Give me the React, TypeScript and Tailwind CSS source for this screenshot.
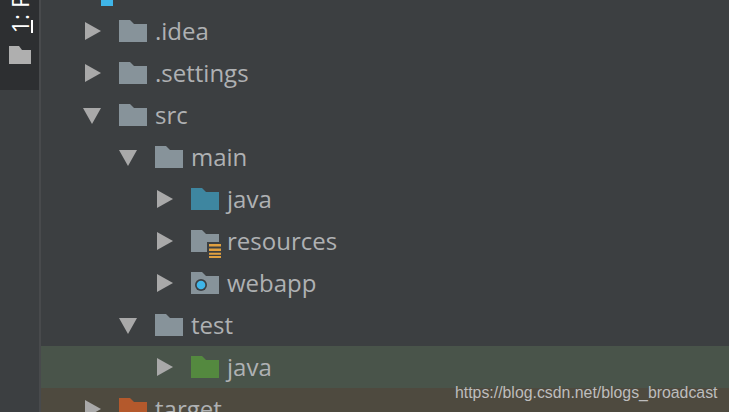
const F = "M0 0H11L15 4H28V22H0Z";
function Folder({ c }: { c: string }) {
  return <svg width="28" height="22" viewBox="0 0 28 22" className="block shrink-0"><path d={F} fill={c} /></svg>;
}
function Arrow({ open }: { open?: boolean }) {
  return (
    <svg width="18" height="18" viewBox="0 0 18 18" className="block shrink-0">
      {open ? <path d="M0 2H18L9 18Z" fill="#a9a9a9" /> : <path d="M2 0L18 9L2 18Z" fill="#a9a9a9" />}
    </svg>
  );
}
function Resource() {
  return (
    <svg width="28" height="22" viewBox="0 0 28 22" className="block shrink-0 overflow-visible">
      <path d="M0 0H11L15 4H28V12H16V22H0Z" fill="#87939a" />
      <path d="M18 14H30V16.500H18ZM18 18.500H30V21H18ZM18 22.700H30V24.700H18ZM18 26H30V28H18Z" fill="#e0a040" />
    </svg>
  );
}
function Web() {
  return (
    <svg width="28" height="22" viewBox="0 0 28 22" className="block shrink-0">
      <path d={F} fill="#87939a" />
      <circle cx="10" cy="13" r="6" fill="#3b3f43" />
      <circle cx="10" cy="13" r="4.300" fill="#3fb5e8" />
    </svg>
  );
}
const Row = ({ depth, open, icon, text, bg }: { depth: number; open?: boolean; icon: React.ReactNode; text: string; bg?: string }) => (
  <div className={`h-[42px] flex items-center ${bg ?? ""}`} style={{ paddingLeft: 42 + depth * 36 }}>
    <Arrow open={open} />
    <div className="ml-[18px]">{icon}</div>
    <span className="ml-2 text-[24px] leading-[42px] text-[#afb1b3]">{text}</span>
  </div>
);
export default function App() {
  return (
    <div className="relative w-[729px] h-[412px] overflow-hidden flex bg-[#3c3f41] font-['Open_Sans','Noto_Sans',sans-serif]">
      <div className="w-[39px] shrink-0 h-full">
        <div className="h-[90px] bg-[#2d2f31] relative overflow-hidden">
          <span className="absolute left-[9px] bottom-[57px] text-[23px] leading-[23px] text-white [writing-mode:vertical-rl] rotate-180 whitespace-nowrap">1: Project</span>
          <div className="absolute left-[31px] top-[20px] w-[2px] h-[13px] bg-white" />
          <div className="absolute left-[9px] top-[46px]">
            <svg width="22" height="18" viewBox="0 0 22 18" className="block"><path d="M0 0H10L13 4H22V18H0Z" fill="#afafaf" /></svg>
          </div>
        </div>
      </div>
      <div className="w-[2px] shrink-0 bg-[#484a4c]" />
      <div className="flex-1 min-w-0 -mt-[32px]">
        <div className="h-[42px] relative">
          <div className="absolute left-[60px] bottom-[4px] w-3 h-[22px] bg-[#3fb5e8]" />
        </div>
        <Row depth={0} icon={<Folder c="#87939a" />} text=".idea" />
        <Row depth={0} icon={<Folder c="#87939a" />} text=".settings" />
        <Row depth={0} open icon={<Folder c="#87939a" />} text="src" />
        <Row depth={1} open icon={<Folder c="#87939a" />} text="main" />
        <Row depth={2} icon={<Folder c="#3e86a0" />} text="java" />
        <Row depth={2} icon={<Resource />} text="resources" />
        <Row depth={2} icon={<Web />} text="webapp" />
        <Row depth={1} open icon={<Folder c="#87939a" />} text="test" />
        <Row depth={2} bg="bg-[#49544a]" icon={<Folder c="#54893f" />} text="java" />
        <Row depth={0} bg="bg-[#4e4a3f]" icon={<Folder c="#b4592c" />} text="target" />
      </div>
      <span className="absolute left-[455px] top-[384px] text-[15.85px] leading-[18px] text-[#bdbdbd] font-['Liberation_Sans',sans-serif]">https://blog.csdn.net/blogs_broadcast</span>
    </div>
  );
}
